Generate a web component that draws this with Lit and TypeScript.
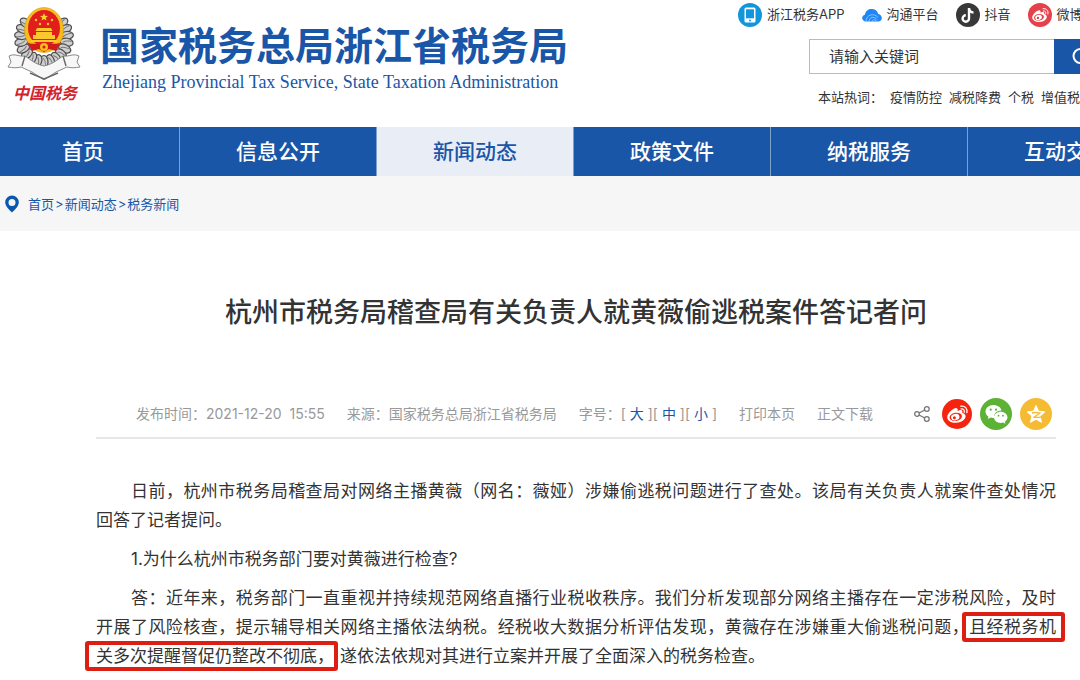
import { LitElement, html, css, svg } from "lit";
import { customElement, property } from "lit/decorators.js";

const LEAVES = [-38, -22, -6, 10, 26, 42, 58, 74, 90, 106, 122, 138, 154, 170, 186, 202, 218];

const emblem = html`
  <svg class="emblem" viewBox="0 0 76 74" width="76" height="74" aria-hidden="true">
    ${LEAVES.map((a) => {
      const t = (a * Math.PI) / 180;
      const x = 37 + 23 * Math.cos(t);
      const y = 32 + 24 * Math.sin(t);
      return svg`<g transform="translate(${x} ${y}) rotate(${a})">
        <ellipse rx="6.500" ry="4" fill="#cfcfcf" stroke="#4d4d4d" stroke-width="1.200"/>
        <path d="M-4 1C-1-2 2-1 5-2" fill="none" stroke="#777" stroke-width="1"/>
      </g>`;
    })}
    <path d="M2 50c6-3 10 1 16 0 6 4 10 8 19 10 9-2 13-6 19-10 6 1 10-3 16 0l-2 6 3 5c-5 1-9 1-13 0l-11 5-12 8-12-8-11-5c-4 1-8 1-13 0l3-5z" fill="#f7f7f7" stroke="#8a8a8a" stroke-width="1"/>
    <path d="M18 50l-3 10M56 50l3 10M23 67l14 6 14-6" fill="none" stroke="#666" stroke-width="1.400"/>
    <ellipse cx="37" cy="24" rx="19.500" ry="22.500" fill="#f6bd1b" stroke="#d99a10" stroke-width=".6"/>
    <ellipse cx="37" cy="22" rx="16" ry="18" fill="#e01f1c"/>
    <path d="M37 7l1.100 2.700 2.900.2-2.300 1.800.8 2.800-2.500-1.600-2.500 1.600.8-2.800-2.300-1.800 2.900-.2z" fill="#ffd52e"/>
    <g fill="#ffc72e"><circle cx="29" cy="14" r="1.200"/><circle cx="33" cy="18" r="1.200"/><circle cx="41" cy="18" r="1.200"/><circle cx="45" cy="14" r="1.200"/>
      <path d="M30 22h14l1.500 3h-17zM29 26h16v3h3v4H26v-4h3zM24 34h26v2H24z"/></g>
    <path d="M20 36c4 3 9 1 12 2l5 4 5-4c3-1 8 1 12-2l-5 9-7-2-5 3-5-3-7 2z" fill="#cf1c18"/>
    <circle cx="37" cy="41" r="4" fill="#f6bd1b"/><circle cx="37" cy="41" r="1.500" fill="#cf1c18"/>
  </svg>`;

const weiboShape = svg`
  <path fill="#fff" d="M13.500 9.200c1.800-.7 3.200-.2 2.700 1.700 2.600.9 3.400 2.800 2 4.900-1.500 2.200-4.500 3.300-7.500 3.200-3.400-.1-6.500-1.800-6.500-4.500 0-2.900 4.800-7.500 7.300-7.200 1 .1 1.300 1 .9 2.200z"/>`;

const weibo = (size: number, bg: string) => html`
  <svg viewBox="0 0 24 24" width=${size} height=${size} aria-hidden="true">
    <circle cx="12" cy="12" r="12" fill=${bg} />
    ${weiboShape}
    <ellipse cx="11" cy="14.300" rx="5" ry="3.300" transform="rotate(-10 11 14.300)" fill=${bg} />
    <ellipse cx="10.600" cy="14.500" rx="3.400" ry="2.600" transform="rotate(-15 10.600 14.500)" fill="#fff" />
    <circle cx="9.900" cy="14.900" r="1.200" fill=${bg} />
    <path d="M15.300 7.900c1.700-.3 3 1 2.500 2.700M15 5.700c3.300-.6 5.700 2 4.900 5.300" fill="none" stroke="#fff" stroke-width="1" stroke-linecap="round" />
  </svg>`;

const phone = html`
  <svg viewBox="0 0 24 24" width="24" height="24" aria-hidden="true">
    <circle cx="12" cy="12" r="12" fill="#1296db" />
    <rect x="6.500" y="4.500" width="11" height="15" rx="1.500" fill="#fff" />
    <rect x="8" y="6.300" width="8" height="9" fill="#1296db" />
    <circle cx="12" cy="17.400" r="1" fill="#1296db" />
  </svg>`;

const cloud = html`
  <svg viewBox="0 3 20 24" width="20" height="24" aria-hidden="true">
    <path d="M4 21.500c-4.500 0-5.300-5.500-1-7C3.500 10.500 7 8.500 10.500 9c3 .3 5 2.200 5.700 5 4.800.6 4.800 7.500 0 7.500z" fill="#1f86f8" />
    <path d="M4 21.500c0-7 8-9 12-4M7 21.500c0-4.500 5.500-5.500 8-2M10 21.500c.5-2 3-2.500 4.500-.5" fill="none" stroke="#a5d0ff" stroke-width=".8" />
  </svg>`;

const douyin = html`
  <svg viewBox="0 0 24 24" width="24" height="24" aria-hidden="true">
    <circle cx="12" cy="12" r="12" fill="#383838" />
    <path d="M13 5v10.500a3.200 3.200 0 1 1-3.200-3.200M13 5.200c.3 2.700 2 4.200 4.500 4.400" fill="none" stroke="#fff" stroke-width="2.400" />
  </svg>`;

const pin = html`
  <svg class="pin" viewBox="0 0 14 18" width="14" height="18" aria-hidden="true">
    <path fill-rule="evenodd" d="M7 .5A6.800 6.800 0 0 1 13.800 7.300C13.800 11.500 9.500 15 7 17.500 4.500 15 .2 11.500.2 7.300A6.800 6.800 0 0 1 7 .5zM7 4a3.500 3.500 0 1 0 0 7 3.500 3.500 0 0 0 0-7z" fill="#0b57b0" />
  </svg>`;

const share = html`
  <svg viewBox="0 0 16 18" width="16" height="18" fill="none" stroke="#757575" stroke-width="1.300" aria-hidden="true">
    <circle cx="3" cy="9" r="2.300" /><circle cx="12.800" cy="4" r="2.400" /><circle cx="12.800" cy="14" r="2.400" />
    <path d="M5.100 8L10.700 5M5.100 10l5.600 3" />
  </svg>`;

const wechat = html`
  <svg viewBox="0 0 32 32" width="32" height="32" aria-hidden="true">
    <circle cx="16" cy="16" r="16" fill="#5bb235" />
    <path d="M13.300 7C8.700 7 5.500 10 5.500 13.500c0 2.200 1.200 4 3 5.200L7.800 21l3-1.400c1 .3 2.300.4 3.400.3-.8-4.300 3-7.500 7.400-7.300C20.800 9.200 17.400 7 13.300 7z" fill="#fff" />
    <path d="M20.800 13.700c-3.900 0-6.800 2.500-6.800 5.600s2.900 5.600 6.800 5.600c.8 0 1.600-.1 2.300-.3l2.400 1.200-.6-2c1.500-1.100 2.600-2.700 2.600-4.500 0-3.100-3-5.600-6.700-5.600z" fill="#fff" />
    <g fill="#5bb235"><circle cx="10.700" cy="11.700" r="1.100" /><circle cx="16" cy="11.700" r="1.100" /><circle cx="18.500" cy="17.700" r=".9" /><circle cx="23" cy="17.700" r=".9" /></g>
  </svg>`;

const qzone = html`
  <svg viewBox="0 0 32 32" width="32" height="32" aria-hidden="true">
    <circle cx="16" cy="16" r="16" fill="#f5bb33" />
    <path d="M16 7.500l2.500 5.700 6.300.7-4.700 4.200 1.400 6.200-5.500-3.100-5.500 3.100 1.400-6.200-4.700-4.200 6.300-.7z" fill="#fff" stroke="#fff" stroke-width="1" stroke-linejoin="round" />
    <path d="M12 15c3-.8 5.500-.6 8 .1l-6 4c2.500.5 5 .4 7.500-.3" fill="none" stroke="#f5bb33" stroke-width="1.300" />
  </svg>`;

const magnifier = html`
  <svg viewBox="0 0 20 20" width="20" height="20" fill="none" stroke="#fff" stroke-width="2" aria-hidden="true">
    <circle cx="8.500" cy="9" r="7" /><path d="M13.500 14l5 5" />
  </svg>`;

@customElement("site-header")
class SiteHeader extends LitElement {
  static styles = css`
    :host { display: block; }
    .bar { display: flex; justify-content: space-between; height: 127px; }
    .brand { display: flex; padding-left: 7px; }
    .crest { display: flex; flex-direction: column; align-items: center; width: 76px; padding-top: 6px; }
    .emblem { display: block; }
    .motto { color: #d3222a; font-size: 16px; line-height: 26px; font-weight: 700; font-style: italic; white-space: nowrap; }
    .names { padding: 19px 0 0 17px; color: #1a56a8; white-space: nowrap; }
    .cn { margin: 0; font-size: 39px; line-height: 54px; font-weight: 700; }
    .en { margin: 0; padding-left: 2px; font: 18px/18px "Liberation Serif", serif; }
    .tools { flex: none; width: 342px; overflow: hidden; white-space: nowrap; color: #333; }
    .links { display: flex; gap: 17px; padding-top: 3px; }
    .links a { display: flex; flex: none; align-items: center; gap: 5px; height: 24px; color: #333; font-size: 13px; line-height: 24px; text-decoration: none; }
    .label { padding-bottom: 2px; }
    .search { display: flex; margin: 12px 0 0 71px; width: 320px; }
    .search input { box-sizing: border-box; width: 245px; height: 35px; margin: 0; padding: 0 19px; border: 1px solid #bbb; border-right: 0; border-radius: 0; background: #fff; font: inherit; font-size: 15px; color: #333; outline: 0; }
    .search input::placeholder { color: #333; opacity: 1; }
    .search button { display: flex; align-items: center; width: 60px; height: 35px; padding: 0 18px; border: 0; background: #1a56a8; }
    .hot { display: flex; gap: 7px; margin: 13px 0 0 80px; font-size: 13px; line-height: 20px; }
    .hot a { color: #333; text-decoration: none; }
  `;

  render() {
    return html`
      <header class="bar">
        <div class="brand">
          <div class="crest">${emblem}<span class="motto">中国税务</span></div>
          <div class="names">
            <p class="cn">国家税务总局浙江省税务局</p>
            <p class="en">Zhejiang Provincial Tax Service, State Taxation Administration</p>
          </div>
        </div>
        <div class="tools">
          <div class="links">
            <a href="#">${phone}<span class="label">浙江税务APP</span></a>
            <a href="#">${cloud}<span class="label">沟通平台</span></a>
            <a href="#">${douyin}<span class="label">抖音</span></a>
            <a href="#">${weibo(24, "#e6404a")}<span class="label">微博</span></a>
          </div>
          <form class="search" @submit=${(e: Event) => e.preventDefault()}>
            <input type="text" placeholder="请输入关键词" aria-label="请输入关键词" />
            <button aria-label="搜索">${magnifier}</button>
          </form>
          <div class="hot">
            <span>本站热词：</span><a href="#">疫情防控</a><a href="#">减税降费</a><a href="#">个税</a><a href="#">增值税</a>
          </div>
        </div>
      </header>`;
  }
}

@customElement("site-nav")
class SiteNav extends LitElement {
  @property() current = "";
  private items = ["首页", "信息公开", "新闻动态", "政策文件", "纳税服务", "互动交流"];

  static styles = css`
    :host { display: block; }
    .nav { display: flex; overflow: hidden; background: #1a56a8; }
    .item { box-sizing: border-box; flex: none; width: 197px; height: 49px; border-right: 1px solid #7f9fcd; color: #fff; font-size: 21px; line-height: 49px; font-weight: 500; text-align: center; text-decoration: none; }
    .item:first-child { width: 180px; padding-right: 13px; }
    .active { background: #e8edf6; color: #1a56a8; }
    .crumbs { display: flex; align-items: center; gap: 9px; height: 55px; padding-left: 5px; background: #f6f6f6; color: #1a56a8; font-size: 13px; line-height: 20px; }
    .crumbs a { color: inherit; text-decoration: none; }
    .sep { padding: 0 1px; }
  `;

  render() {
    return html`
      <nav class="nav">
        ${this.items.map((name) => html`<a href="#" class="item ${name === this.current ? "active" : ""}">${name}</a>`)}
      </nav>
      <div class="crumbs">${pin}<span><a href="#">首页</a><span class="sep">&gt;</span><a href="#">新闻动态</a><span class="sep">&gt;</span><a href="#">税务新闻</a></span></div>`;
  }
}

@customElement("news-article")
class NewsArticle extends LitElement {
  static styles = css`
    :host { display: block; padding: 62px 24px 0 96px; color: #333; }
    .title { margin: 0; font-size: 27px; line-height: 40px; font-weight: 500; text-align: center; }
    .meta { display: flex; align-items: center; gap: 22px; height: 47px; margin-top: 57px; padding-left: 40px; border-bottom: 2px solid #e6e6e6; color: #999; font-size: 14px; line-height: 20px; white-space: nowrap; }
    .meta a { color: inherit; text-decoration: none; }
    .meta .size { color: #1a56a8; }
    .date { white-space: pre; }
    .share { display: flex; align-items: center; gap: 8px; margin-left: auto; padding-right: 4px; }
    .share a { display: flex; }
    .share .first { margin-right: 4px; }
    .body { padding-top: 38px; font-size: 17px; line-height: 29px; }
    .body p { margin: 0 0 10px; text-indent: 35px; text-align: justify; }
    .line { display: block; text-align-last: justify; }
    .line + .line, .rest { text-indent: 0; }
    .rest { display: block; }
    .mark { position: relative; }
    .mark::after { content: ""; position: absolute; inset: -5px -9px -5px -7px; border: 4px solid #dc1f12; border-radius: 3px; }
    .wide { margin-right: 6px; }
    .wide::after { inset: -5px -4px -5px -11px; }
  `;

  render() {
    return html`
      <article>
        <h1 class="title">杭州市税务局稽查局有关负责人就黄薇偷逃税案件答记者问</h1>
        <div class="meta">
          <span class="date">发布时间：2021-12-20  15:55</span>
          <span>来源：国家税务总局浙江省税务局</span>
          <span>字号：[ <a class="size" href="#">大</a> ][ <a class="size" href="#">中</a> ][ <a class="size" href="#">小</a> ]</span>
          <a href="#">打印本页</a>
          <a href="#">正文下载</a>
          <div class="share">
            <a class="first" href="#" aria-label="分享">${share}</a>
            <a href="#" aria-label="微博">${weibo(30, "#f5240f")}</a>
            <a href="#" aria-label="微信">${wechat}</a>
            <a href="#" aria-label="QQ空间">${qzone}</a>
          </div>
        </div>
        <div class="body">
          <p><span class="line">日前，杭州市税务局稽查局对网络主播黄薇（网名：薇娅）涉嫌偷逃税问题进行了查处。该局有关负责人就案件查处情况</span><span class="rest">回答了记者提问。</span></p>
          <p>1.为什么杭州市税务部门要对黄薇进行检查?</p>
          <p><span class="line">答：近年来，税务部门一直重视并持续规范网络直播行业税收秩序。我们分析发现部分网络主播存在一定涉税风险，及时</span><span class="line">开展了风险核查，提示辅导相关网络主播依法纳税。经税收大数据分析评估发现，黄薇存在涉嫌重大偷逃税问题，<span class="mark">且经税务机</span></span><span class="rest"><span class="mark wide">关多次提醒督促仍整改不彻底，</span>遂依法依规对其进行立案并开展了全面深入的税务检查。</span></p>
        </div>
      </article>`;
  }
}

@customElement("app-root")
class AppRoot extends LitElement {
  static styles = css`
    :host { display: block; min-height: 100vh; overflow: hidden; background: #fff; font-family: Inter, "Noto Sans CJK SC", sans-serif; }
  `;

  render() {
    return html`
      <site-header></site-header>
      <site-nav current="新闻动态"></site-nav>
      <news-article></news-article>`;
  }
}
